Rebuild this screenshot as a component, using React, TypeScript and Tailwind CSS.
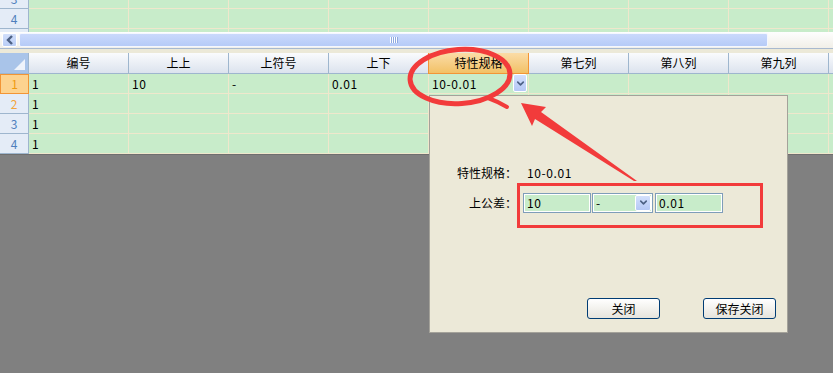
import { ChevronDown } from 'lucide-react';

const HEADERS = ['编号', '上上', '上符号', '上下', '特性规格', '第七列', '第八列', '第九列'];

function DropBtn({ className }: { className: string }) {
  return (
    <div className={`flex items-center justify-center rounded-[2px] border border-white bg-gradient-to-b from-[#d3e0fc] to-[#b5c8f6] ${className}`}>
      <ChevronDown size={11} strokeWidth={3.5} className="text-[#4d6185]" />
    </div>
  );
}

function RowHead({ n, active, orange }: { n?: number; active?: boolean; orange?: boolean }) {
  if (active)
    return (
      <div className="w-[29px] shrink-0 h-full flex items-center justify-center border border-[#f29536] bg-[#fdd38f] text-[#ee9a10]">{n}</div>
    );
  return (
    <div className={`w-[29px] shrink-0 h-full flex items-center justify-center border-r border-b border-[#9eb6ce] bg-[#e4ecf7] ${orange ? 'text-[#f3a43c]' : 'text-[#4f7fbd]'}`}>
      {n}
    </div>
  );
}

function Cell({ text, edit }: { text?: string; edit?: boolean }) {
  return (
    <div className="w-[100px] shrink-0 h-full flex items-center border-r border-b border-[#efe7cc] bg-[#c8ecca] pl-[3px] relative">
      <span className="leading-none tracking-[0.6px]">{text}</span>
      {edit && <DropBtn className="absolute right-[1px] top-[0px] w-[14px] h-[18px]" />}
    </div>
  );
}

function GridRow({ n, cells, active, orange }: { n?: number; cells: string[]; active?: boolean; orange?: boolean }) {
  return (
    <div className="flex h-[20px]">
      <RowHead n={n} active={active} orange={orange} />
      {Array.from({ length: 8 }).map((_, i) => (
        <Cell key={i} text={cells[i]} edit={active && i === 4} />
      ))}
      <div className="flex-1 h-full border-b border-[#efe7cc] bg-[#c8ecca]" />
    </div>
  );
}

function XpButton({ label }: { label: string }) {
  return (
    <div className="w-[73px] h-[21px] flex items-center justify-center rounded-[3px] border border-[#003c74] bg-gradient-to-b from-white to-[#e6e4dc] text-black">
      {label}
    </div>
  );
}

function Input({ w, text }: { w: string; text: string }) {
  return (
    <div className={`${w} h-[20px] border border-[#7f9db9] p-[1px] bg-white`}>
      <div className="h-full bg-[#c8ecca] flex items-center pl-[2px] leading-none tracking-[0.6px]">{text}</div>
    </div>
  );
}

export default function App() {
  return (
    <div className="relative w-[833px] h-[373px] overflow-hidden bg-[#808080] text-[12px] text-black font-['Noto_Sans_CJK_SC',sans-serif]">
      {/* upper grid, scrolled */}
      <div className="h-[32px] overflow-hidden">
        <div className="-mt-[11px]">
          <GridRow n={3} cells={[]} />
          <GridRow n={4} cells={[]} />
          <GridRow cells={[]} />
        </div>
      </div>

      {/* horizontal scrollbar */}
      <div className="h-[16px] flex items-center bg-gradient-to-b from-[#fefefe] to-[#f1efe8]">
        <div className="ml-[2px] w-[15px] h-[14px] rounded-[2px] border border-white bg-gradient-to-b from-[#d2dffb] to-[#b9cdf6] flex items-center justify-center">
          <svg width="8" height="10" viewBox="0 0 8 10">
            <polyline points="6,1 2,5 6,9" fill="none" stroke="#4d6185" strokeWidth="2.4" />
          </svg>
        </div>
        <div className="ml-[2px] w-[749px] h-[14px] rounded-[2px] border border-[#f4f7ff] bg-gradient-to-b from-[#cad9fc] to-[#b6cbf7] flex items-center justify-center">
          <div className="flex gap-[1px]">
            {[0, 1, 2, 3].map(i => (
              <div key={i} className="w-[1px] h-[6px] bg-white shadow-[1px_0_0_#8fa9e0]" />
            ))}
          </div>
        </div>
      </div>
      <div className="h-[1px] bg-[#a8b9cf]" />
      <div className="h-[4px] bg-[#ece9d8]" />

      {/* column header */}
      <div className="flex h-[21px]">
        <div className="w-[29px] shrink-0 h-full relative border-r border-b border-[#9eb6ce] bg-[#a9c4e9]">
          <svg className="absolute right-[3px] bottom-[3px]" width="11" height="11" viewBox="0 0 11 11">
            <polygon points="11,0 11,11 0,11" fill="#eef3fb" />
          </svg>
        </div>
        {HEADERS.map((h, i) =>
          i === 4 ? (
            <div key={i} className="shrink-0 h-full flex items-center justify-center border-x border-b border-[#f29536] bg-gradient-to-b from-[#fbdca6] to-[#f2c165] -ml-[1px] w-[101px]">
              {h}
            </div>
          ) : (
            <div key={i} className="w-[100px] shrink-0 h-full flex items-center justify-center border-r border-b border-[#9eb6ce] bg-gradient-to-b from-[#fafbfd] to-[#dce3ee]">
              {h}
            </div>
          )
        )}
        <div className="flex-1 h-full border-b border-[#9eb6ce] bg-gradient-to-b from-[#fafbfd] to-[#dce3ee]" />
      </div>

      {/* rows */}
      <GridRow n={1} active cells={['1', '10', '-', '0.01', '10-0.01']} />
      <GridRow n={2} orange cells={['1']} />
      <GridRow n={3} cells={['1']} />
      <GridRow n={4} cells={['1']} />
      <div className="h-[1px] bg-[#6f6f6f]" />

      {/* popup editor */}
      <div className="absolute left-[429px] top-[95px] w-[359px] h-[238px] border border-[#a4a29a] bg-[#ece9d8]">
        <div className="pt-[67px]">
          <div className="flex h-[20px] items-center">
            <div className="w-[87px] text-right">特性规格：</div>
            <div className="ml-[10px] tracking-[0.6px]">10-0.01</div>
          </div>
          <div className="flex h-[21px] items-center mt-[9px]">
            <div className="w-[87px] text-right">上公差：</div>
            <div className="ml-[6px] flex items-center">
              <Input w="w-[68px]" text="10" />
              <div className="ml-[1px] w-[61px] h-[20px] border border-[#7f9db9] p-[1px] bg-white">
                <div className="h-full bg-[#c8ecca] flex items-center pl-[2px] relative">
                  <span className="leading-none">-</span>
                  <DropBtn className="absolute right-0 top-0 w-[16px] h-full" />
                </div>
              </div>
              <div className="ml-[2px]">
                <Input w="w-[68px]" text="0.01" />
              </div>
            </div>
          </div>
          <div className="flex mt-[85px] pl-[157px] gap-[43px]">
            <XpButton label="关闭" />
            <XpButton label="保存关闭" />
          </div>
        </div>
      </div>

      {/* red annotations */}
      <svg className="absolute left-0 top-0 pointer-events-none" width="833" height="373" viewBox="0 0 833 373">
        <ellipse cx="460" cy="76.5" rx="50" ry="27" fill="none" stroke="#f23b3b" strokeWidth="5" transform="rotate(-4 460 76.5)" />
        <path d="M488 98 Q499 102 507 107" fill="none" stroke="#f23b3b" strokeWidth="4" strokeLinecap="round" />
        <polygon points="521,103 546,107 541,112 637,181 634,181 535,119 532,126" fill="#f23b3b" />
        <rect x="518.5" y="184.5" width="243" height="42" fill="none" stroke="#f23b3b" strokeWidth="3" />
      </svg>
    </div>
  );
}
